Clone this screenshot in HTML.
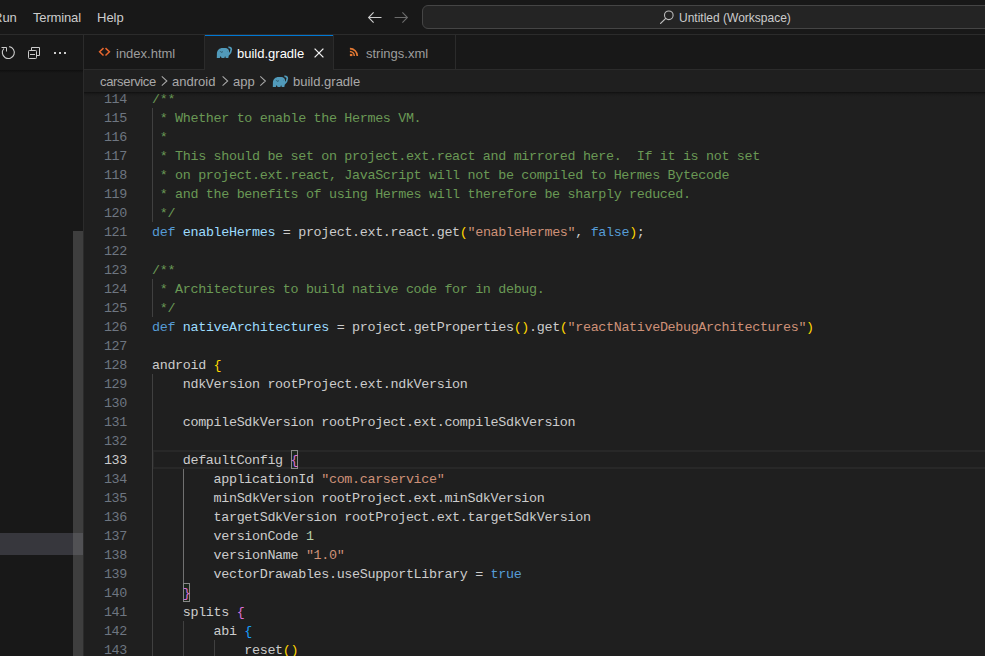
<!DOCTYPE html>
<html><head><meta charset="utf-8"><style>
html,body{margin:0;padding:0;}
body{width:985px;height:656px;overflow:hidden;position:relative;background:#1f1f1f;font-family:"Liberation Sans",sans-serif;}
.abs{position:absolute;}
.ui{position:absolute;font-size:13px;white-space:nowrap;line-height:16px;}
#editor{position:absolute;left:84px;top:92px;width:901px;height:564px;overflow:hidden;background:#1f1f1f;}
#inner{position:absolute;left:-84px;top:-92px;width:985px;height:656px;}
.ln{position:absolute;left:84px;width:43px;letter-spacing:-0.3412px;text-align:right;height:19px;line-height:19px;font-family:"Liberation Mono",monospace;font-size:13.4px;white-space:pre;}
.cl{position:absolute;left:152px;height:19px;line-height:19px;font-family:"Liberation Mono",monospace;font-size:13.4px;letter-spacing:-0.3412px;white-space:pre;color:#cccccc;}
</style></head><body>
<!-- title bar -->
<div class="abs" style="left:0;top:0;width:985px;height:34px;background:#181818;border-bottom:1px solid #2b2b2b"></div>
<div class="ui" style="left:-7px;top:10px;color:#cccccc">Run</div>
<div class="ui" style="left:33px;top:10px;color:#cccccc;letter-spacing:-0.15px">Terminal</div>
<div class="ui" style="left:97px;top:10px;color:#cccccc">Help</div>
<svg class="abs" style="left:360px;top:5px" width="60" height="25" viewBox="360 5 60 25">
  <path d="M368.8,17.5 H381.5 M373.6,12.4 L368.6,17.5 L373.6,22.6" fill="none" stroke="#cccccc" stroke-width="1.1"/>
  <path d="M394.6,17.5 H407.3 M402.4,12.4 L407.4,17.5 L402.4,22.6" fill="none" stroke="#6b6b6b" stroke-width="1.1"/>
</svg>
<div class="abs" style="left:422px;top:5px;width:600px;height:24px;box-sizing:border-box;border:1px solid #454545;border-radius:6px;background:#242424"></div>
<svg class="abs" style="left:655px;top:6px" width="24" height="22" viewBox="655 6 24 22">
  <circle cx="668.8" cy="15.3" r="4.3" fill="none" stroke="#bdbdbd" stroke-width="1.1"/>
  <path d="M665.8,18.4 L660.6,23.4" stroke="#bdbdbd" stroke-width="1.3" stroke-linecap="round"/>
</svg>
<div class="ui" style="left:679px;top:10px;color:#cccccc;font-size:12px">Untitled (Workspace)</div>

<!-- sidebar -->
<div class="abs" style="left:0;top:35px;width:83px;height:621px;background:#181818;border-right:1px solid #2b2b2b"></div>
<div class="abs" style="left:0;top:70px;width:83px;height:3px;background:linear-gradient(#0f0f0f,rgba(24,24,24,0))"></div>
<div class="abs" style="left:0;top:533px;width:83px;height:22px;background:#37373d"></div>
<div class="abs" style="left:73px;top:231px;width:10px;height:425px;background:rgba(121,121,121,0.4)"></div>
<svg class="abs" style="left:0;top:40px" width="80" height="25" viewBox="0 40 80 25">
  <path d="M9.2,46.6 A6,6 0 1 1 3.9,48.5" fill="none" stroke="#cccccc" stroke-width="1.1"/>
  <path d="M1.5,47.5 H6.5 V51.5" fill="none" stroke="#cccccc" stroke-width="1"/>
  <path d="M31.5,50 V47.5 H39.5 V55.5 H37" fill="none" stroke="#cccccc" stroke-width="1" stroke-linejoin="round"/>
  <rect x="28.5" y="50.5" width="8" height="8" rx="0.8" fill="none" stroke="#cccccc" stroke-width="1"/>
  <path d="M30,54.5 H35" stroke="#cccccc" stroke-width="1"/>
  <rect x="54" y="52" width="2" height="2" fill="#cccccc"/>
  <rect x="59" y="52" width="2" height="2" fill="#cccccc"/>
  <rect x="64" y="52" width="2" height="2" fill="#cccccc"/>
</svg>

<!-- tabs -->
<div class="abs" style="left:84px;top:35px;width:901px;height:34px;background:#181818;border-bottom:1px solid #2b2b2b"></div>
<div class="abs" style="left:204px;top:35px;width:1px;height:35px;background:#2b2b2b"></div>
<div class="abs" style="left:205px;top:35px;width:128px;height:35px;background:#1f1f1f;box-sizing:border-box;border-top:1px solid #0078d4"></div>
<div class="abs" style="left:333px;top:35px;width:1px;height:35px;background:#2b2b2b"></div>
<div class="abs" style="left:455px;top:35px;width:1px;height:35px;background:#2b2b2b"></div>
<svg class="abs" style="left:95px;top:44px" width="18" height="16" viewBox="95 44 18 16">
  <path d="M103.5,48.1 L99.6,51.8 L103.5,55.5 M105.5,48.1 L109.4,51.8 L105.5,55.5" fill="none" stroke="#e8672e" stroke-width="1.5"/>
</svg>
<div class="ui" style="left:116px;top:46px;color:#9d9d9d">index.html</div>
<svg class="abs" style="left:216px;top:46px" width="17" height="13" viewBox="0 0 17 13"><path fill="#519aba" d="M0.8,12.1 L0.9,7.5 C1,4 3.5,1.9 6.5,1.9 L9.5,1.9 C11.5,1.9 12.8,3.2 13,5 L13,8.5 L12.3,12.1 L9.8,12.1 L9.1,9.9 L8.4,12.1 L5.6,12.1 L4.7,9.9 L3.8,12.1 Z"/><path fill="none" stroke="#519aba" stroke-width="1.7" d="M12.2,9.2 C14.5,7 15.3,5.5 15.3,3.6 C15.3,1.9 14,1 12.4,1.4"/><path fill="none" stroke="#1f3b48" stroke-width="0.8" d="M4.3,5.4 C4.8,6.4 6,6.5 6.8,5.6 M11.3,5.3 L11.5,5.4"/></svg>
<div class="ui" style="left:237px;top:46px;color:#ffffff">build.gradle</div>
<svg class="abs" style="left:310px;top:45px" width="18" height="16" viewBox="310 45 18 16">
  <path d="M314.6,48.6 L323.4,57.4 M323.4,48.6 L314.6,57.4" stroke="#f0f0f0" stroke-width="1.3"/>
</svg>
<svg class="abs" style="left:346px;top:44px" width="16" height="16" viewBox="346 44 16 16">
  <rect x="349.9" y="53.9" width="2.5" height="2.2" fill="#e37933"/>
  <path d="M349.9,51.6 A4.4,4.4 0 0 1 354.3,56" fill="none" stroke="#e37933" stroke-width="1.5"/>
  <path d="M349.9,48.6 A7.4,7.4 0 0 1 357.3,56" fill="none" stroke="#e37933" stroke-width="1.7"/>
</svg>
<div class="ui" style="left:366px;top:46px;color:#9d9d9d">strings.xml</div>

<!-- breadcrumbs -->
<div class="abs" style="left:84px;top:70px;width:901px;height:22px;background:#1f1f1f"></div>
<div class="ui" style="left:100px;top:74px;color:#a9a9a9;letter-spacing:-0.33px">carservice</div>
<svg class="abs" style="left:84px;top:70px" width="300" height="22" viewBox="84 70 300 22">
  <path d="M161.8,76.3 L166.9,81 L161.8,85.7 M222.6,76.3 L227.7,81 L222.6,85.7 M260.3,76.3 L265.4,81 L260.3,85.7" fill="none" stroke="#a9a9a9" stroke-width="1.05"/>
</svg>
<div class="ui" style="left:172px;top:74px;color:#a9a9a9">android</div>
<div class="ui" style="left:233px;top:74px;color:#a9a9a9">app</div>
<svg class="abs" style="left:272px;top:75px" width="17" height="13" viewBox="0 0 17 13"><path fill="#519aba" d="M0.8,12.1 L0.9,7.5 C1,4 3.5,1.9 6.5,1.9 L9.5,1.9 C11.5,1.9 12.8,3.2 13,5 L13,8.5 L12.3,12.1 L9.8,12.1 L9.1,9.9 L8.4,12.1 L5.6,12.1 L4.7,9.9 L3.8,12.1 Z"/><path fill="none" stroke="#519aba" stroke-width="1.7" d="M12.2,9.2 C14.5,7 15.3,5.5 15.3,3.6 C15.3,1.9 14,1 12.4,1.4"/><path fill="none" stroke="#1f3b48" stroke-width="0.8" d="M4.3,5.4 C4.8,6.4 6,6.5 6.8,5.6 M11.3,5.3 L11.5,5.4"/></svg>
<div class="ui" style="left:293px;top:74px;color:#a9a9a9">build.gradle</div>

<!-- editor -->
<div id="editor"><div id="inner">
<div style="position:absolute;left:152px;top:450px;width:833px;height:19px;box-sizing:border-box;border:2px solid #282828;border-right:none"></div>
<div style="position:absolute;left:152px;top:108px;width:1px;height:114px;background:#404040"></div>
<div style="position:absolute;left:152px;top:279px;width:1px;height:38px;background:#404040"></div>
<div style="position:absolute;left:152px;top:374px;width:1px;height:285px;background:#404040"></div>
<div style="position:absolute;left:183px;top:469px;width:1px;height:114px;background:#707070"></div>
<div style="position:absolute;left:183px;top:621px;width:1px;height:38px;background:#404040"></div>
<div style="position:absolute;left:214px;top:640px;width:1px;height:19px;background:#404040"></div>
<div style="position:absolute;left:290.60px;top:450px;width:7.70px;height:19px;box-sizing:border-box;border:1px solid #888888;background:rgba(0,100,0,0.1)"></div>
<div style="position:absolute;left:182.80px;top:583px;width:7.70px;height:19px;box-sizing:border-box;border:1px solid #888888;background:rgba(0,100,0,0.1)"></div>
<div class="ln" style="top:90px;color:#6e7681">114</div>
<div class="cl" style="top:90px"><span style="color:#6a9955">/**</span></div>
<div class="ln" style="top:109px;color:#6e7681">115</div>
<div class="cl" style="top:109px"><span style="color:#6a9955"> * Whether to enable the Hermes VM.</span></div>
<div class="ln" style="top:128px;color:#6e7681">116</div>
<div class="cl" style="top:128px"><span style="color:#6a9955"> *</span></div>
<div class="ln" style="top:147px;color:#6e7681">117</div>
<div class="cl" style="top:147px"><span style="color:#6a9955"> * This should be set on project.ext.react and mirrored here.  If it is not set</span></div>
<div class="ln" style="top:166px;color:#6e7681">118</div>
<div class="cl" style="top:166px"><span style="color:#6a9955"> * on project.ext.react, JavaScript will not be compiled to Hermes Bytecode</span></div>
<div class="ln" style="top:185px;color:#6e7681">119</div>
<div class="cl" style="top:185px"><span style="color:#6a9955"> * and the benefits of using Hermes will therefore be sharply reduced.</span></div>
<div class="ln" style="top:204px;color:#6e7681">120</div>
<div class="cl" style="top:204px"><span style="color:#6a9955"> */</span></div>
<div class="ln" style="top:223px;color:#6e7681">121</div>
<div class="cl" style="top:223px"><span style="color:#569cd6">def</span> <span style="color:#9cdcfe">enableHermes</span> = project.ext.react.get<span style="color:#ffd700">(</span><span style="color:#ce9178">&quot;enableHermes&quot;</span>, <span style="color:#569cd6">false</span><span style="color:#ffd700">)</span>;</div>
<div class="ln" style="top:242px;color:#6e7681">122</div>
<div class="ln" style="top:261px;color:#6e7681">123</div>
<div class="cl" style="top:261px"><span style="color:#6a9955">/**</span></div>
<div class="ln" style="top:280px;color:#6e7681">124</div>
<div class="cl" style="top:280px"><span style="color:#6a9955"> * Architectures to build native code for in debug.</span></div>
<div class="ln" style="top:299px;color:#6e7681">125</div>
<div class="cl" style="top:299px"><span style="color:#6a9955"> */</span></div>
<div class="ln" style="top:318px;color:#6e7681">126</div>
<div class="cl" style="top:318px"><span style="color:#569cd6">def</span> <span style="color:#9cdcfe">nativeArchitectures</span> = project.getProperties<span style="color:#ffd700">()</span>.get<span style="color:#ffd700">(</span><span style="color:#ce9178">&quot;reactNativeDebugArchitectures&quot;</span><span style="color:#ffd700">)</span></div>
<div class="ln" style="top:337px;color:#6e7681">127</div>
<div class="ln" style="top:356px;color:#6e7681">128</div>
<div class="cl" style="top:356px">android <span style="color:#ffd700">{</span></div>
<div class="ln" style="top:375px;color:#6e7681">129</div>
<div class="cl" style="top:375px">    ndkVersion rootProject.ext.ndkVersion</div>
<div class="ln" style="top:394px;color:#6e7681">130</div>
<div class="ln" style="top:413px;color:#6e7681">131</div>
<div class="cl" style="top:413px">    compileSdkVersion rootProject.ext.compileSdkVersion</div>
<div class="ln" style="top:432px;color:#6e7681">132</div>
<div class="ln" style="top:451px;color:#cccccc">133</div>
<div class="cl" style="top:451px">    defaultConfig <span style="color:#da70d6">{</span></div>
<div class="ln" style="top:470px;color:#6e7681">134</div>
<div class="cl" style="top:470px">        applicationId <span style="color:#ce9178">&quot;com.carservice&quot;</span></div>
<div class="ln" style="top:489px;color:#6e7681">135</div>
<div class="cl" style="top:489px">        minSdkVersion rootProject.ext.minSdkVersion</div>
<div class="ln" style="top:508px;color:#6e7681">136</div>
<div class="cl" style="top:508px">        targetSdkVersion rootProject.ext.targetSdkVersion</div>
<div class="ln" style="top:527px;color:#6e7681">137</div>
<div class="cl" style="top:527px">        versionCode <span style="color:#b5cea8">1</span></div>
<div class="ln" style="top:546px;color:#6e7681">138</div>
<div class="cl" style="top:546px">        versionName <span style="color:#ce9178">&quot;1.0&quot;</span></div>
<div class="ln" style="top:565px;color:#6e7681">139</div>
<div class="cl" style="top:565px">        vectorDrawables.useSupportLibrary = <span style="color:#569cd6">true</span></div>
<div class="ln" style="top:584px;color:#6e7681">140</div>
<div class="cl" style="top:584px">    <span style="color:#da70d6">}</span></div>
<div class="ln" style="top:603px;color:#6e7681">141</div>
<div class="cl" style="top:603px">    splits <span style="color:#da70d6">{</span></div>
<div class="ln" style="top:622px;color:#6e7681">142</div>
<div class="cl" style="top:622px">        abi <span style="color:#179fff">{</span></div>
<div class="ln" style="top:641px;color:#6e7681">143</div>
<div class="cl" style="top:641px">            reset<span style="color:#ffd700">()</span></div>
</div></div>
<div class="abs" style="left:84px;top:92px;width:901px;height:5px;background:linear-gradient(rgba(0,0,0,0.5),rgba(0,0,0,0.15) 40%,rgba(0,0,0,0))"></div>
</body></html>
